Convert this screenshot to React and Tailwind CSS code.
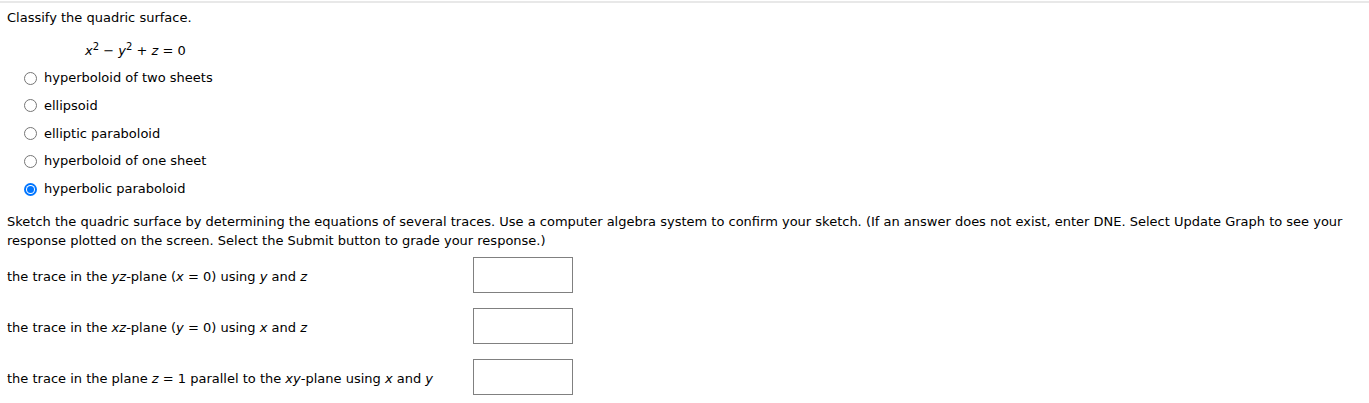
import React from "react";

const options = [
  { label: "hyperboloid of two sheets", checked: false },
  { label: "ellipsoid", checked: false },
  { label: "elliptic paraboloid", checked: false },
  { label: "hyperboloid of one sheet", checked: false },
  { label: "hyperbolic paraboloid", checked: true },
];

function Radio({ checked }) {
  if (checked) {
    return (
      <span className="w-[13px] h-[13px] rounded-full bg-[#0075ff] flex items-center justify-center shrink-0">
        <span className="w-[9px] h-[9px] rounded-full bg-white flex items-center justify-center">
          <span className="w-[7px] h-[7px] rounded-full bg-[#0075ff]" />
        </span>
      </span>
    );
  }
  return <span className="w-[13px] h-[13px] rounded-full border border-[#767676] bg-white shrink-0" />;
}

function Answer({ children }) {
  return (
    <div className="flex items-center h-[36px]">
      <div className="w-[466px] pt-[3px]">{children}</div>
      <div className="w-[100px] h-[36px] border border-[#808080] bg-white" />
    </div>
  );
}

export default function App() {
  return (
    <div
      className="bg-white text-[13px] text-[#000] leading-[16px] pt-[1px]"
      style={{ fontFamily: "Verdana, 'DejaVu Sans', sans-serif" }}
    >
      <div className="border-t-2 border-[#e8e8e8] px-[7px] pt-[7px]">
        <p>Classify the quadric surface.</p>

        <div className="pl-[78px] mt-[17px]">
          <i>x</i>
          <sup className="text-[10px]">2</sup> − <i>y</i>
          <sup className="text-[10px]">2</sup> + <i>z</i> = 0
        </div>

        <div className="mt-[11px] flex flex-col gap-[11.75px] pl-[17px]">
          {options.map((o) => (
            <label key={o.label} className="flex items-center gap-[7px]">
              <Radio checked={o.checked} />
              <span>{o.label}</span>
            </label>
          ))}
        </div>

        <p className="mt-[15px] leading-[19px] pr-[10px]">
          Sketch the quadric surface by determining the equations of several traces. Use a computer algebra system to confirm your sketch. (If an answer does not exist, enter DNE. Select Update Graph to see your response plotted on the screen. Select the Submit button to grade your response.)
        </p>

        <div className="mt-[7px] flex flex-col gap-[15px]">
          <Answer>
            the trace in the <i>yz</i>-plane (<i>x</i> = 0) using <i>y</i> and <i>z</i>
          </Answer>
          <Answer>
            the trace in the <i>xz</i>-plane (<i>y</i> = 0) using <i>x</i> and <i>z</i>
          </Answer>
          <Answer>
            the trace in the plane <i>z</i> = 1 parallel to the <i>xy</i>-plane using <i>x</i> and <i>y</i>
          </Answer>
        </div>
      </div>
    </div>
  );
}
